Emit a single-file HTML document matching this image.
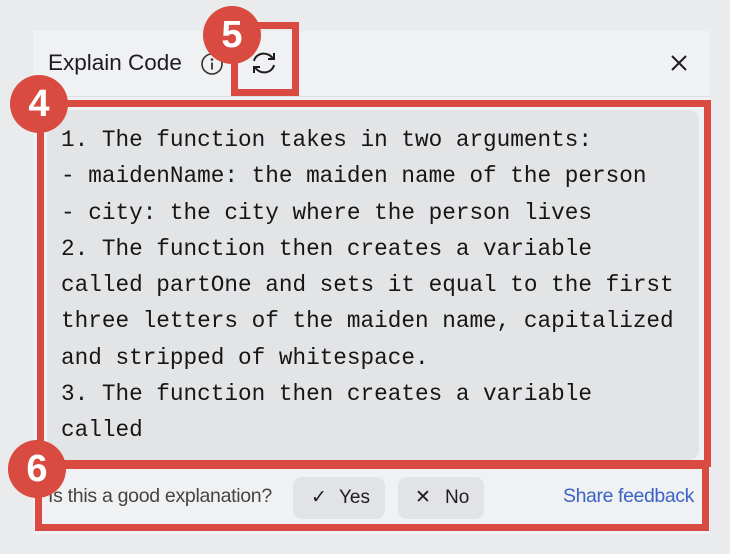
<!DOCTYPE html><html><head><style>
body{margin:0;width:730px;height:554px;background:#eaebed;position:relative;overflow:hidden;font-family:"Liberation Sans",sans-serif}
.panel{position:absolute;left:33px;top:31px;width:677px;height:503px;background:#f0f1f3}
.hdr{position:absolute;left:33px;top:31px;width:677px;height:65px;border-bottom:1px solid #dcdde0}
.title{position:absolute;left:48px;top:50px;font-size:22.5px;color:#1d1d1f}
.code{position:absolute;left:47px;top:110px;width:652px;height:350px;background:#e3e4e6;border-radius:10px}
.txt{position:absolute;left:61px;top:122px;font-family:"Liberation Mono",monospace;font-size:22.7px;line-height:36.3px;color:#161616;white-space:pre}
.red{position:absolute;border:7px solid #d94b41;box-sizing:border-box}
.num{position:absolute;width:58px;height:58px;border-radius:50%;background:#d94b41;color:#fff;font-weight:bold;font-size:38px;text-align:center;line-height:58px}
.btn{position:absolute;top:477px;height:42px;background:#e2e3e5;border-radius:9px;font-size:19px;color:#1d1d1f;line-height:42px}
</style></head><body>
<div class="panel"></div><div class="hdr"></div>
<div class="title">Explain Code</div>
<svg style="position:absolute;left:200px;top:52px" width="24" height="24" viewBox="0 0 24 24"><circle cx="12" cy="12" r="10" fill="none" stroke="#333" stroke-width="1.6"/><circle cx="12" cy="7.5" r="1.3" fill="#333"/><path d="M12 10.5v7" stroke="#333" stroke-width="1.8"/></svg>
<svg style="position:absolute;left:250px;top:49px" width="28" height="28" viewBox="0 0 28 28" fill="none" stroke="#1d1d1f" stroke-width="2"><path d="M4 12a10 9 0 0 1 19-2"/><path d="M24 4v6h-6"/><path d="M24 16a10 9 0 0 1-19 2"/><path d="M4 24v-6h6"/></svg>
<svg style="position:absolute;left:669px;top:53px" width="20" height="20" viewBox="0 0 20 20" stroke="#1d1d1f" stroke-width="2"><path d="M3 3l14 14M17 3L3 17"/></svg>
<div class="code"></div>
<div class="txt">1. The function takes in two arguments:
- maidenName: the maiden name of the person
- city: the city where the person lives
2. The function then creates a variable
called partOne and sets it equal to the first
three letters of the maiden name, capitalized
and stripped of whitespace.
3. The function then creates a variable
called</div>
<div style="position:absolute;left:48px;top:485px;font-size:19.5px;color:#444;letter-spacing:-0.3px">Is this a good explanation?</div>
<div class="btn" style="left:293px;width:92px"><span style="position:absolute;left:18px">✓</span><span style="position:absolute;left:46px">Yes</span></div>
<div class="btn" style="left:398px;width:86px"><span style="position:absolute;left:17px">✕</span><span style="position:absolute;left:47px">No</span></div>
<div style="position:absolute;left:563px;top:485px;font-size:19.5px;color:#3a63c4;letter-spacing:-0.4px">Share feedback</div>
<div class="red" style="left:231px;top:22px;width:68px;height:74px"></div>
<div class="red" style="left:37px;top:100px;width:674px;height:367px"></div>
<div class="red" style="left:35px;top:462px;width:674px;height:69px"></div>
<div class="num" style="left:203px;top:6px">5</div>
<div class="num" style="left:10px;top:75px">4</div>
<div class="num" style="left:8px;top:440px">6</div>
</body></html>
